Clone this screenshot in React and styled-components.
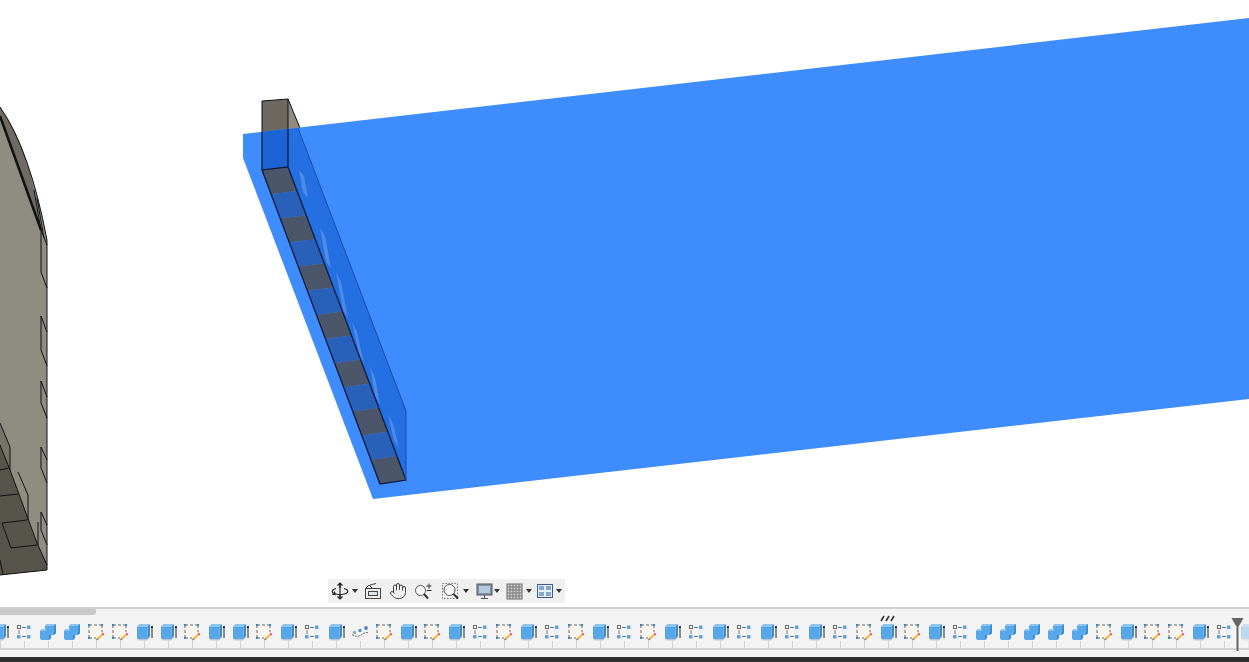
import React from "react";
import styled, { createGlobalStyle } from "styled-components";
import { Hand } from "lucide-react";

const Global = createGlobalStyle`
  html, body { margin: 0; padding: 0; height: 100%; overflow: hidden; background: #fff; font-family: "Liberation Sans", sans-serif; }
  #root { height: 100%; }
`;

const Page = styled.div`
  height: 100vh;
  display: flex;
  flex-direction: column;
  overflow: hidden;
`;
const Viewport = styled.main`
  position: relative;
  flex: 1;
  min-height: 0;
  background: #fff;
  overflow: hidden;
`;
const Scene = styled.svg`
  display: block;
  width: 100%;
  height: 100%;
`;
const NavBar = styled.div`
  position: absolute;
  left: 328px;
  bottom: 4px;
  width: 237px;
  height: 24px;
  display: flex;
  align-items: center;
  background: #f0f0f0;
`;
const NavItem = styled.div`
  width: ${(p) => p.$w}px;
  height: 24px;
  display: flex;
  align-items: center;
  justify-content: center;
  gap: ${(p) => p.$gap ?? 3}px;
  color: #3c3c3c;
`;
const Caret = styled.span`
  width: 0;
  height: 0;
  border-left: 3px solid transparent;
  border-right: 3px solid transparent;
  border-top: 4px solid #333;
`;
const Timeline = styled.footer`
  position: relative;
  height: 55px;
  flex: none;
  display: flex;
  flex-direction: column;
  background: #f3f3f3;
  border-top: 2px solid #d0d0d0;
  box-sizing: border-box;
  overflow: hidden;
`;
const ScrollThumb = styled.div`
  width: 96px;
  height: 6px;
  flex: none;
  background: #c8c8c8;
  border-bottom-right-radius: 3px;
`;
const Track = styled.div`
  display: flex;
  margin-left: -12px;
  height: 33px;
  flex: none;
  padding-top: 8px;
  box-sizing: border-box;
`;
const Cell = styled.div`
  position: relative;
  width: 24px;
  flex: none;
  display: flex;
  justify-content: center;
  height: 25px;
  opacity: ${(p) => (p.$faded ? 0.35 : 1)};
  &::after {
    content: "";
    position: absolute;
    left: 12px;
    top: 18px;
    width: 1px;
    height: 7px;
    background: #d2d2d2;
  }
`;
const Hash = styled.svg`
  position: absolute;
  left: 4px;
  top: -8px;
`;
const Rule = styled.div`
  height: 2px;
  flex: none;
  background: #d2d2d2;
`;
const Spacer = styled.div`
  flex: 1;
`;
const BottomStrip = styled.div`
  height: 5px;
  flex: none;
  background: #2e2e2e;
`;
const Marker = styled.svg`
  position: absolute;
  left: 1231px;
  top: 8px;
`;

/* timeline glyphs */
const Extrude = () => (
  <svg width="18" height="18" viewBox="0 0 18 18">
    <path d="M2 15 L3 17.5 L12 17.5 L15 14.5 L15 12 L2 12Z" fill="#c2c5c9" />
    <path d="M2 3.5 L4.5 1 L15 1 L12.5 3.5Z" fill="#8cc5f2" />
    <path d="M12.5 3.5 L15 1 L15 12.5 L12.5 16Z" fill="#3c8bd2" />
    <path d="M2 3.5 L12.5 3.5 L12.5 16 L4 16 Q2 16 2 14Z" fill="#58a7ea" />
    <path d="M17 15 V3" stroke="#222" strokeWidth="1" />
    <path d="M15.5 5 L17 2.5 L18.5 5Z" fill="#222" />
  </svg>
);
const Sketch = () => (
  <svg width="18" height="18" viewBox="0 0 18 18">
    <rect x="2" y="2" width="13" height="13" fill="#f9f4ee" />
    <path d="M2 2 H15 M2 15 H9 M2 2 V15 M15 2 V9" stroke="#666" strokeWidth="1" strokeDasharray="3 2" fill="none" />
    <path d="M1 1 h2 v2 h-2z M14 1 h2 v2 h-2z M1 14 h2 v2 h-2z" fill="#2f86cc" />
    <path d="M9 17.5 L10 15 L14.5 11 L16 12.5 L11.5 16.5Z" fill="#f2b84a" />
    <path d="M14.5 11 L15.8 9.6 L17.4 11.2 L16 12.5Z" fill="#ee4f70" />
    <path d="M9 17.5 L10 15 L11.5 16.5Z" fill="#777" />
  </svg>
);
const Nodes = () => (
  <svg width="18" height="18" viewBox="0 0 18 18">
    <path d="M7 4.5 H11 M4 7 V11 M7 13.5 H11" stroke="#777" strokeWidth="1" />
    <rect x="2.5" y="2.5" width="3" height="3" fill="#fff" stroke="#666" />
    <rect x="12" y="2.5" width="3.5" height="3.5" fill="#62a0d6" />
    <rect x="2" y="12" width="3.5" height="3.5" fill="#62a0d6" />
    <rect x="12" y="12" width="3.5" height="3.5" fill="#62a0d6" />
  </svg>
);
const Combine = () => (
  <svg width="18" height="18" viewBox="0 0 18 18">
    <path d="M1 8 L3 6 L6 6 L6 3 L8 1 L17 1 L17 10 L15 12 L12 12 L12 15 L10 17 L3 17 Q1 17 1 15Z" fill="#58a7ea" />
    <path d="M6 3 L8 1 L17 1 L15 3Z M1 8 L3 6 L8 6 L6 8Z" fill="#8cc5f2" />
    <path d="M15 3 L17 1 L17 10 L15 12Z M10 12 L12 12 L12 15 L10 17Z" fill="#3c8bd2" />
  </svg>
);
const Curve = () => (
  <svg width="18" height="18" viewBox="0 0 18 18">
    <path d="M1 11.5 Q6 15 10 12 T17 9.5" stroke="#666" strokeWidth="1" strokeDasharray="2 1" fill="none" />
    <circle cx="3.5" cy="9.5" r="1.7" fill="#8aa7c4" />
    <circle cx="9" cy="7.5" r="1.7" fill="#5b8fc4" />
    <circle cx="15" cy="5" r="1.9" fill="#4f86c0" />
  </svg>
);

const glyphs = { E: Extrude, S: Sketch, N: Nodes, C: Combine, U: Curve };
const sequence = "ENCCSSEESEESENEUSESENSENSENSENENENENSESENCCCCCSESSEN".split("");

/* navigation glyphs */
const Orbit = () => (
  <svg width="18" height="18" viewBox="0 0 18 18" fill="none" stroke="#222" strokeWidth="1.2">
    <path d="M9 1 V17 M6.5 3.5 L9 1 L11.5 3.5 M6.5 14.5 L9 17 L11.5 14.5" />
    <path d="M5 6.5 C1 7.5 0 10 3 11.5 C6 12.8 12 12.8 15 11.5 C18 10 17 7.5 13 6.5" />
    <path d="M1 12 L4 12.5 L3.5 9.5" />
    <path d="M7 6 H11 V12 H7Z" fill="#eee" stroke="none" />
    <path d="M9 1 V17" />
  </svg>
);
const LookAt = () => (
  <svg width="18" height="18" viewBox="0 0 18 18" fill="none" stroke="#444">
    <rect x="1.5" y="6.5" width="15" height="10" />
    <rect x="4.5" y="9.5" width="9" height="4" fill="#dfe4ea" />
    <path d="M2 6 L5 3 L8 6 M6 3 L12 1.5" />
  </svg>
);
const ZoomPM = () => (
  <svg width="20" height="18" viewBox="0 0 20 18" fill="none">
    <circle cx="6.5" cy="8.5" r="5" stroke="#555" fill="#f8fafc" />
    <path d="M10 12 L14 16.5" stroke="#333" strokeWidth="2" />
    <path d="M15 1.5 V6.5 M12.5 4 H17.5 M12.5 8.5 H17.5" stroke="#333" />
  </svg>
);
const ZoomFit = () => (
  <svg width="18" height="18" viewBox="0 0 18 18" fill="none">
    <rect x="0.5" y="1.5" width="15" height="15" stroke="#777" strokeDasharray="1.5 1.5" />
    <circle cx="7.5" cy="8" r="5.5" stroke="#555" fill="#f8fafc" />
    <path d="M11.5 12 L16 16.5" stroke="#333" strokeWidth="2" />
  </svg>
);
const Monitor = () => (
  <svg width="17" height="17" viewBox="0 0 17 17" fill="none">
    <rect x="1" y="1" width="15" height="11" fill="#8096ad" stroke="#555" />
    <rect x="3" y="3" width="11" height="7" fill="#b5c9de" />
    <path d="M8.5 12 V15 M5 15.5 H12" stroke="#555" />
  </svg>
);
const Grid = () => (
  <svg width="17" height="17" viewBox="0 0 17 17" fill="none">
    <rect x="1" y="1" width="15" height="15" fill="#d2d2d2" stroke="#666" />
    <path d="M4 1 V16 M7 1 V16 M10 1 V16 M13 1 V16 M1 4 H16 M1 7 H16 M1 10 H16 M1 13 H16" stroke="#777" />
  </svg>
);
const Views = () => (
  <svg width="16" height="14" viewBox="0 0 16 14" fill="none">
    <rect x="0.5" y="0.5" width="15" height="13" fill="#e8eef6" stroke="#3c5f8a" />
    <path d="M2 2 H7 V6 H2Z M9 2 H14 V6 H9Z M2 8 H7 V12 H2Z M9 8 H14 V12 H9Z" fill="#86a7d2" />
  </svg>
);

/* the ribbed strip on the underside of the fin */
const strip = { tl: [262, 170], tr: [288, 167], bl: [380, 484], br: [406, 480] };
const mix = (a, b, t) => [a[0] + (b[0] - a[0]) * t, a[1] + (b[1] - a[1]) * t];
const stripSegments = Array.from({ length: 13 }, (_, i) => {
  const a = mix(strip.tl, strip.bl, i / 13);
  const b = mix(strip.tr, strip.br, i / 13);
  const c = mix(strip.tr, strip.br, (i + 1) / 13);
  const d = mix(strip.tl, strip.bl, (i + 1) / 13);
  return { points: [a, b, c, d].map((p) => p.join(",")).join(" "), fill: i % 2 ? "#2860ba" : "#4c566b" };
});

const modelLines = [
  "M34 190 L41 230",
  "M37 198 L44 238",
  "M41 230 L47 245",
  "M41 230 V272 L47 288",
  "M41 316 V350 L47 366",
  "M41 316 L47 332",
  "M41 381 V403 L47 418",
  "M41 381 L47 397",
  "M41 447 V468 L47 483",
  "M41 447 L47 460",
  "M41 512 V530 L47 545",
  "M41 512 L47 525",
  "M38 522 V545",
  "M0 423 L10 447 V470",
  "M18 472 L28 495 V520",
  "M0 445 L10 470 L37 543 L47 565",
  "M0 470 L9 468",
  "M0 496 L18 494",
  "M2 523 L27 520",
  "M2 523 L11 548 L37 545",
  "M0 560 L3 574",
];

const ModelScene = () => (
  <Scene viewBox="0 0 1249 607" preserveAspectRatio="xMinYMin slice">
    {/* neighbouring body */}
    <path d="M0 107 Q30 150 47 240 V570 L0 575Z" fill="#8f8d82" />
    <path d="M0 116 L0 107 Q24 140 34 190 L40 226Z" fill="#6f6b62" />
    <path d="M0 445 L10 470 L37 543 L47 565 V570 L0 575Z" fill="#57544c" />
    <path d="M0 423 L10 447 V470 L0 445Z" fill="#77746a" />
    <path d="M0 116 L41 230" stroke="#111" strokeWidth="2.5" fill="none" />
    <path d="M0 107 Q30 150 47 240 V570 L0 575" stroke="#111" strokeWidth="1" fill="none" />
    {modelLines.map((d) => (
      <path key={d} d={d} stroke="#111" strokeWidth="1" fill="none" />
    ))}

    {/* fin above the plane */}
    <path d="M262 101 L288 99 V167 L262 170Z" fill="#6c675f" />
    <path d="M288 99 L300 128 L288 130Z" fill="#908d80" />
    <path d="M262 101 L288 99 L300 128 M262 101 V170 M288 99 V167" stroke="#111" fill="none" />

    {/* blue plane */}
    <path d="M243 134 L1249 18 V399 L373 499 L243 158Z" fill="#3f8cff" />
    {/* translucent fin faces */}
    <path d="M262 132 L298 128 L406 411 V480 L288 167 L262 170Z" fill="#2470e2" />
    <path d="M262 132 L288 129 V167 L262 170Z" fill="#1e63d3" />
    {stripSegments.map((s) => (
      <polygon key={s.points} points={s.points} fill={s.fill} />
    ))}
    <path d="M299 170 L304 176 L308 198 L303 192Z M320 228 L325 236 L331 268 L326 262Z M336 272 L341 282 L348 318 L343 310Z M352 322 L357 332 L364 364 L359 354Z M370 366 L375 378 L380 404 L375 396Z M388 414 L393 424 L399 448 L394 440Z" fill="#4f8ae6" />
    <path d="M262 170 L288 167 L406 480 L380 484Z M262 132 V170 M288 129 V167" stroke="#071530" strokeWidth="1.2" fill="none" />
    <path d="M298 128 L406 411 V480" stroke="#1450ab" fill="none" />
  </Scene>
);

const navItems = [
  { w: 33, icon: <Orbit />, caret: true },
  { w: 24, icon: <LookAt /> },
  { w: 26, icon: <Hand size={18} strokeWidth={1.3} /> },
  { w: 26, icon: <ZoomPM /> },
  { w: 36, icon: <ZoomFit />, caret: true },
  { w: 30, icon: <Monitor />, caret: true, gap: 1 },
  { w: 31, icon: <Grid />, caret: true },
  { w: 31, icon: <Views />, caret: true },
];

export default function App() {
  return (
    <Page>
      <Global />
      <Viewport>
        <ModelScene />
        <NavBar>
          {navItems.map((item, i) => (
            <NavItem key={i} $w={item.w} $gap={item.gap}>
              {item.icon}
              {item.caret && <Caret />}
            </NavItem>
          ))}
        </NavBar>
      </Viewport>
      <Timeline>
        <ScrollThumb />
        <Track>
          {sequence.map((k, i) => {
            const Glyph = glyphs[k];
            return (
              <Cell key={i}>
                <Glyph />
                {i === 37 && (
                  <Hash width="16" height="7" viewBox="0 0 16 7">
                    <path d="M1 6 L4 1 M6 6 L9 1 M11 6 L14 1" stroke="#333" strokeWidth="1.6" />
                  </Hash>
                )}
              </Cell>
            );
          })}
          <Cell $faded>
            <Extrude />
          </Cell>
        </Track>
        <Rule />
        <Spacer />
        <BottomStrip />
        <Marker width="13" height="34" viewBox="0 0 13 34">
          <path d="M0.5 1 H12.5 L8 9 H5Z" fill="#666" />
          <rect x="5.5" y="8" width="2" height="26" fill="#666" />
        </Marker>
      </Timeline>
    </Page>
  );
}
